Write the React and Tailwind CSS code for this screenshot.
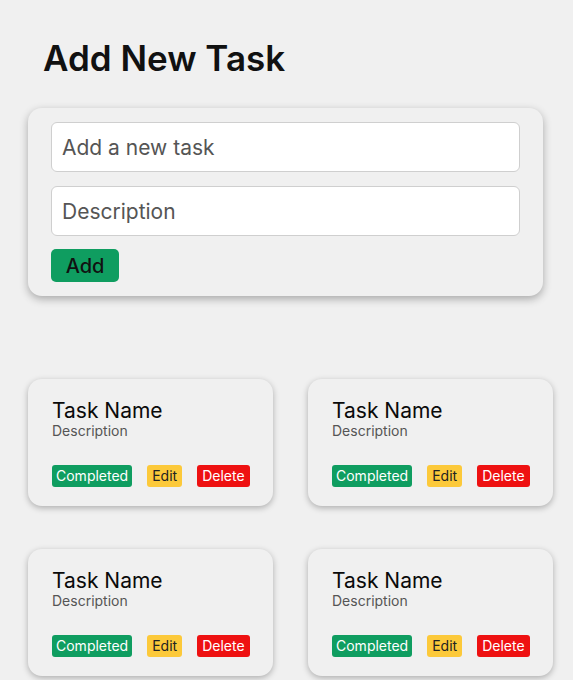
const tasks = [
  { id: 1, name: "Task Name", description: "Description" },
  { id: 2, name: "Task Name", description: "Description" },
  { id: 3, name: "Task Name", description: "Description" },
  { id: 4, name: "Task Name", description: "Description" },
];

function TaskCard({ task }) {
  return (
    <article className="rounded-[14px] bg-[#f0f0f0] pl-6 pr-4 pt-[20px] pb-[19px] shadow-[0_2px_6px_rgba(0,0,0,0.28)]">
      <h2 className="text-[21px] leading-[24px] text-[#0a0a0a]">{task.name}</h2>
      <p className="-mt-[1px] text-[14px] leading-[18px] text-[#555]">{task.description}</p>
      <div className="mt-[25px] flex gap-[15px] text-[14px] leading-[22px]">
        <button className="rounded-[3px] bg-[#0f9d60] px-[4px] text-white">Completed</button>
        <button className="rounded-[3px] bg-[#fcc93a] px-[5px] text-[#222]">Edit</button>
        <button className="rounded-[3px] bg-[#ee1111] px-[5px] text-white">Delete</button>
      </div>
    </article>
  );
}

export default function App() {
  return (
    <main className="min-h-screen bg-[#f0f0f0] px-7 pt-9 pb-8 font-['Inter',sans-serif]">
      <h1 className="pl-[15px] text-[35px] font-semibold leading-[44px] text-[#111]">Add New Task</h1>

      <section className="mt-7 flex w-[515px] flex-col gap-[14px] rounded-[14px] bg-[#f0f0f0] px-[23px] pt-[14px] pb-[14px] shadow-[0_3px_8px_rgba(0,0,0,0.3)]">
        <input
          className="h-[50px] rounded-[6px] border border-[#cfcfcf] bg-white px-[10px] text-[21px] text-[#333] placeholder:text-[#555] outline-none"
          placeholder="Add a new task"
        />
        <input
          className="h-[50px] rounded-[6px] border border-[#cfcfcf] bg-white px-[10px] text-[21px] text-[#333] placeholder:text-[#555] outline-none"
          placeholder="Description"
        />
        <div className="-mt-[1px]">
          <button className="h-[33px] w-[68px] rounded-[5px] bg-[#0f9d60] text-[20px] font-medium text-[#111]">Add</button>
        </div>
      </section>

      <section className="mt-[83px] grid w-[525px] grid-cols-2 gap-x-[35px] gap-y-[43px]">
        {tasks.map((task) => (
          <TaskCard key={task.id} task={task} />
        ))}
      </section>
    </main>
  );
}
